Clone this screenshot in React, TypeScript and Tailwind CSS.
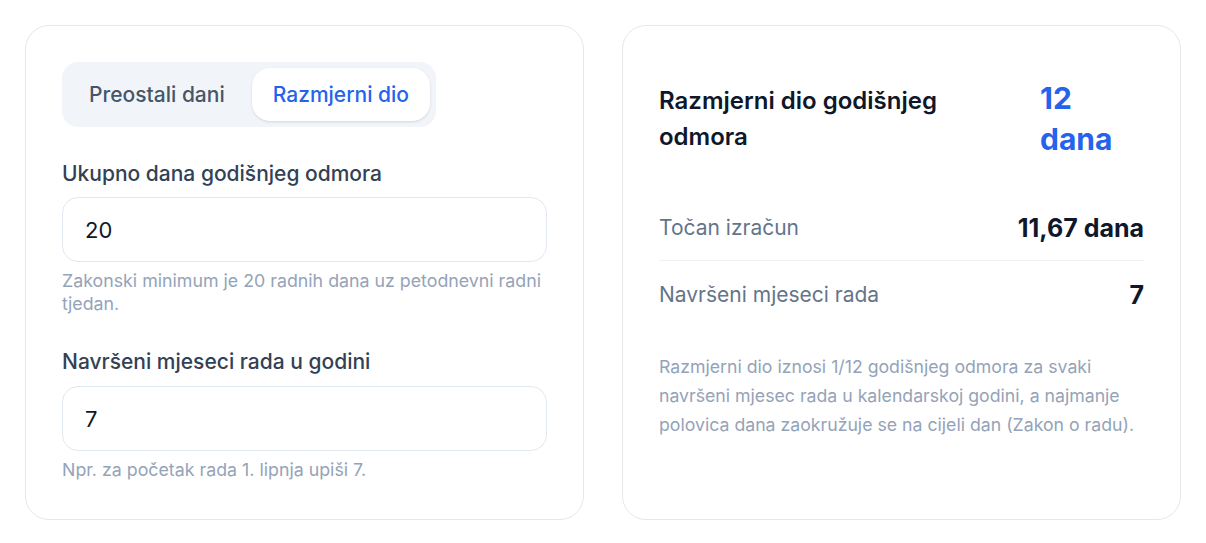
import React, { useState } from 'react';

export default function App() {
  const [tab, setTab] = useState<'preostali' | 'razmjerni'>('razmjerni');
  const [total, setTotal] = useState('20');
  const [months, setMonths] = useState('7');

  const exact = (parseFloat(total) || 0) * (parseFloat(months) || 0) / 12;
  const rounded = Math.round(exact);

  return (
    <div className="min-h-screen bg-white p-[25px] font-['Inter',sans-serif]">
      <div className="grid grid-cols-2 gap-[38px]">
        {/* Left card: inputs */}
        <div className="rounded-[24px] border border-[#e5e7eb] bg-white p-[36px] pb-[38px]">
          <div className="inline-flex gap-[6px] rounded-2xl bg-[#f1f5f9] p-[6px]">
            <button
              onClick={() => setTab('preostali')}
              className={`rounded-[18px] px-[21px] py-[13px] text-[21px] leading-[27px] font-medium ${
                tab === 'preostali' ? 'bg-white text-[#2563eb] shadow-sm' : 'text-[#475569]'
              }`}
            >
              Preostali dani
            </button>
            <button
              onClick={() => setTab('razmjerni')}
              className={`rounded-[18px] px-[21px] py-[13px] text-[21px] leading-[27px] font-medium ${
                tab === 'razmjerni' ? 'bg-white text-[#2563eb] shadow-sm' : 'text-[#475569]'
              }`}
            >
              Razmjerni dio
            </button>
          </div>

          <div className="mt-[33px]">
            <label className="block text-[21px] leading-[27px] font-medium text-[#334155]">
              Ukupno dana godišnjeg odmora
            </label>
            <input
              value={total}
              onChange={(e) => setTotal(e.target.value)}
              className="mt-[10px] block h-[65px] w-full rounded-2xl border border-[#e2e8f0] px-[22px] text-[22px] text-[#0f172a] outline-none"
            />
            <p className="mt-[7px] text-[17.8px] leading-[23px] text-[#94a3b8]">
              Zakonski minimum je 20 radnih dana uz petodnevni radni tjedan.
            </p>
          </div>

          <div className="mt-[33px]">
            <label className="block text-[21px] leading-[27px] font-medium text-[#334155]">
              Navršeni mjeseci rada u godini
            </label>
            <input
              value={months}
              onChange={(e) => setMonths(e.target.value)}
              className="mt-[11px] block h-[65px] w-full rounded-2xl border border-[#e2e8f0] px-[22px] text-[22px] text-[#0f172a] outline-none"
            />
            <p className="mt-[7px] text-[17.8px] leading-[23px] text-[#94a3b8]">
              Npr. za početak rada 1. lipnja upiši 7.
            </p>
          </div>
        </div>

        {/* Right card: result */}
        <div className="rounded-[24px] border border-[#e5e7eb] bg-white px-[36px] pt-[52px]">
          <div className="flex items-center justify-between">
            <h3 className="w-[300px] text-[24px] leading-[36px] font-semibold text-[#0f172a]">
              Razmjerni dio godišnjeg odmora
            </h3>
            <div className="w-[104px] text-[30px] leading-[41px] font-bold text-[#2563eb]">
              {rounded} dana
            </div>
          </div>

          <div className="mt-[36px]">
            <div className="flex items-center justify-between border-b border-[#eef2f6] py-[18px]">
              <span className="text-[21px] leading-[28px] text-[#64748b]">Točan izračun</span>
              <span className="text-[25px] leading-[28px] font-bold text-[#0f172a]">
                {exact.toFixed(2).replace('.', ',')} dana
              </span>
            </div>
            <div className="flex items-center justify-between pt-[20px]">
              <span className="text-[21px] leading-[28px] text-[#64748b]">Navršeni mjeseci rada</span>
              <span className="text-[25px] leading-[28px] font-bold text-[#0f172a]">{months}</span>
            </div>
          </div>

          <p className="mt-[43px] text-[17.7px] leading-[29px] text-[#94a3b8]">
            Razmjerni dio iznosi 1/12 godišnjeg odmora za svaki navršeni mjesec rada u kalendarskoj godini, a
            najmanje polovica dana zaokružuje se na cijeli dan (Zakon o radu).
          </p>
        </div>
      </div>
    </div>
  );
}
